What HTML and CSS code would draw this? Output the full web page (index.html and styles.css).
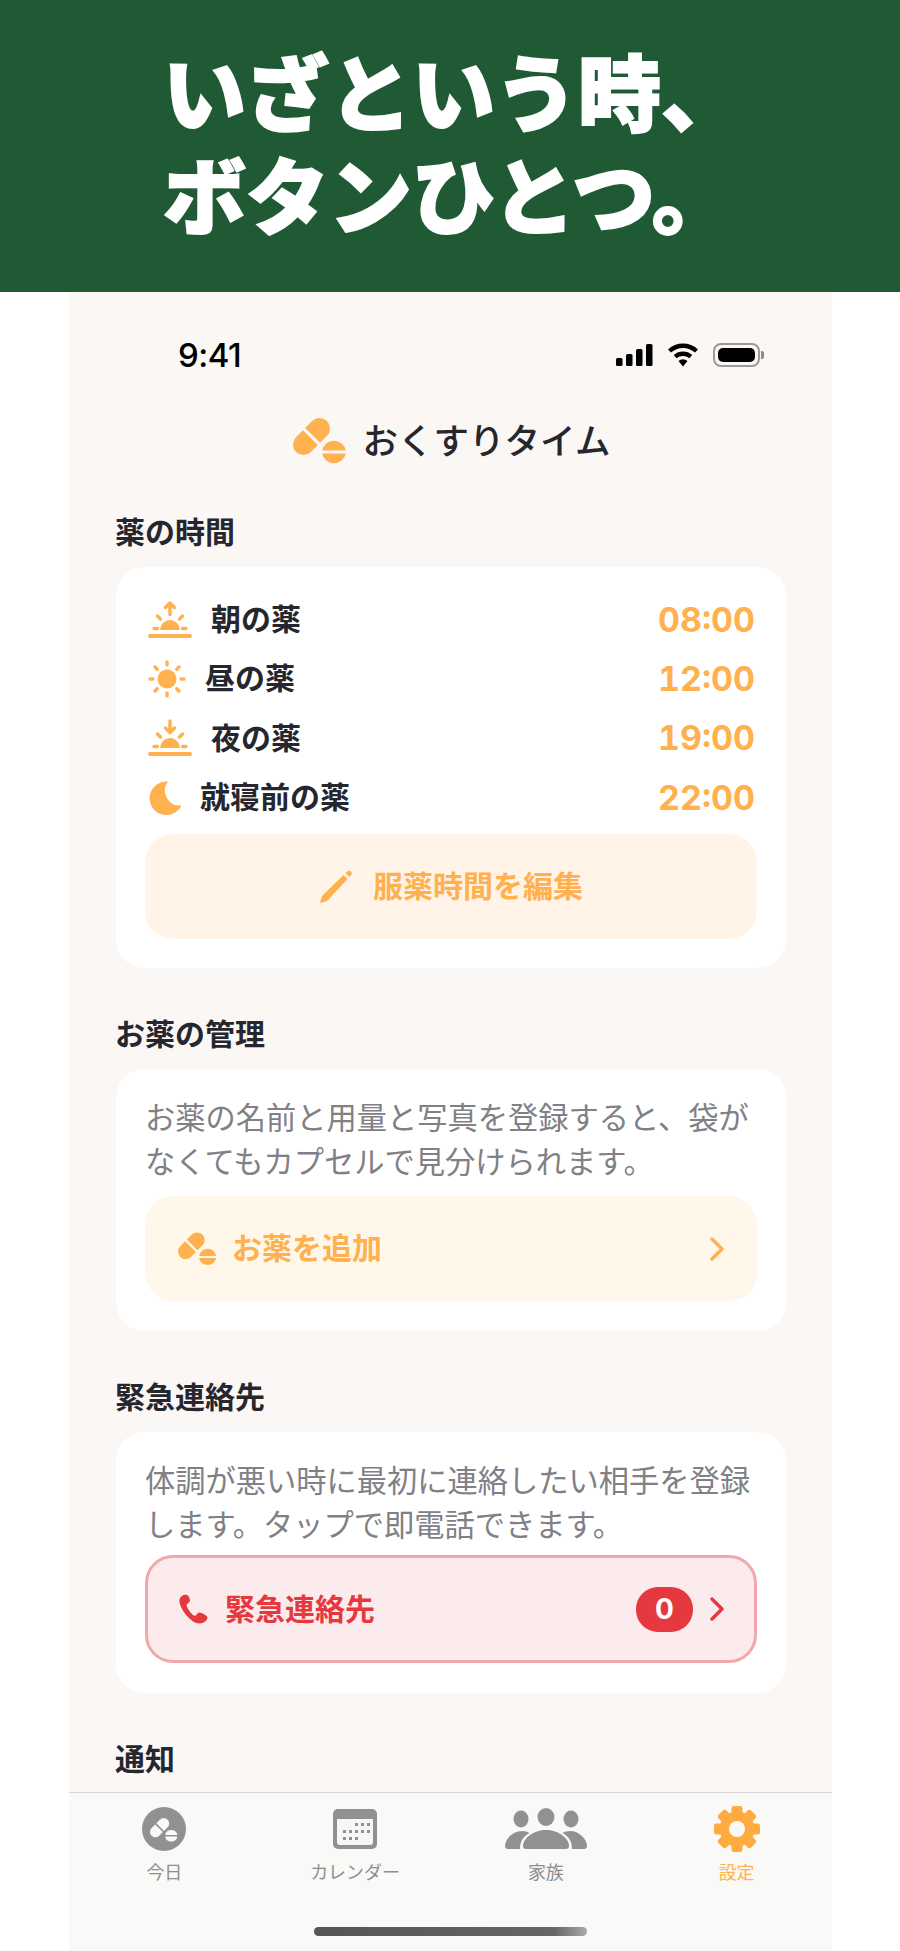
FILE: index.html
```html
<!DOCTYPE html>
<html lang="ja">

<head>
    <meta charset="UTF-8">
    <meta name="viewport" content="width=device-width, initial-scale=1.0">
    <title>おくすりタイム</title>
    <link rel="stylesheet" href="styles.css">
</head>

<body>

    <svg class="defs" width="0" height="0" aria-hidden="true">
        <!-- pill logo, used in the header, the add button and the today tab -->
        <symbol id="pills" viewBox="0 0 54 46">
            <g transform="translate(18.5 18.5) rotate(-45)">
                <path d="M-1.6 -10.5 H-11.3 A10.5 10.5 0 0 0 -11.3 10.5 H-1.6 Z"/>
                <path d="M1.6 -10.5 H11.3 A10.5 10.5 0 0 1 11.3 10.5 H1.6 Z"/>
            </g>
            <path d="M29.2 32.6 A12 12 0 0 1 52.8 32.6 Z"/>
            <path d="M29.2 35.4 A12 12 0 0 0 52.8 35.4 Z"/>
        </symbol>
        <symbol id="chevron" viewBox="0 0 14 24">
            <path d="M2 2 L12 12 L2 22" fill="none" stroke="currentColor" stroke-width="3.4" stroke-linecap="round" stroke-linejoin="round"/>
        </symbol>
    </svg>

    <header class="banner">
        <h1>いざという時、<br>ボタンひとつ。</h1>
    </header>

    <div class="phone">

        <div class="status-bar">
            <span class="clock">9:41</span>
            <div class="status-icons">
                <svg width="37" height="22" viewBox="0 0 37 22">
                    <rect x="0" y="14" width="6.5" height="8" rx="1.5"/>
                    <rect x="10" y="10" width="6.5" height="12" rx="1.5"/>
                    <rect x="20" y="5" width="6.5" height="17" rx="1.5"/>
                    <rect x="30" y="0" width="6.5" height="22" rx="1.5"/>
                </svg>
                <svg width="32" height="24" viewBox="0 0 32 24">
                    <path d="M2.5 8 A20 20 0 0 1 29.5 8" fill="none" stroke="#000" stroke-width="4.4"/>
                    <path d="M8.2 13.6 A12 12 0 0 1 23.8 13.6" fill="none" stroke="#000" stroke-width="4.4"/>
                    <path d="M11.5 18 A7 7 0 0 1 20.5 18 L16 23.5 Z"/>
                </svg>
                <div class="battery"><div class="battery-level"></div></div>
            </div>
        </div>

        <div class="app-title">
            <svg class="app-logo"><use href="#pills"/></svg>
            <span>おくすりタイム</span>
        </div>

        <main class="content">

            <section class="section">
                <h2>薬の時間</h2>
                <div class="card card-times">
                    <div class="time-row">
                        <svg class="icon-sunrise" viewBox="0 0 44 38">
                            <path d="M12 29 A10 10 0 0 1 32 29 Z"/>
                            <g fill="none" stroke="currentColor" stroke-width="3.4" stroke-linecap="round" stroke-linejoin="round">
                                <path d="M2 35 H42" stroke-width="3.8"/>
                                <path d="M6 27.5 H9.5 M34.5 27.5 H38 M9.5 15 L12.5 18 M34.5 15 L31.5 18"/>
                                <path d="M22 13.5 V2 M17.5 6.5 L22 2 L26.5 6.5"/>
                            </g>
                        </svg>
                        <span class="time-name">朝の薬</span>
                        <span class="time-value">08:00</span>
                    </div>
                    <div class="time-row">
                        <svg class="icon-sun" viewBox="0 0 38 38">
                            <circle cx="19" cy="19" r="9.5"/>
                            <g fill="none" stroke="currentColor" stroke-width="3.4" stroke-linecap="round">
                                <path d="M19 2 V5 M19 33 V36 M2 19 H5 M33 19 H36 M7 7 L9.2 9.2 M31 7 L28.8 9.2 M7 31 L9.2 28.8 M31 31 L28.8 28.8"/>
                            </g>
                        </svg>
                        <span class="time-name">昼の薬</span>
                        <span class="time-value">12:00</span>
                    </div>
                    <div class="time-row">
                        <svg class="icon-sunrise" viewBox="0 0 44 38">
                            <path d="M12 29 A10 10 0 0 1 32 29 Z"/>
                            <g fill="none" stroke="currentColor" stroke-width="3.4" stroke-linecap="round" stroke-linejoin="round">
                                <path d="M2 35 H42" stroke-width="3.8"/>
                                <path d="M6 27.5 H9.5 M34.5 27.5 H38 M9.5 15 L12.5 18 M34.5 15 L31.5 18"/>
                                <path d="M22 2 V13.5 M17.5 9 L22 13.5 L26.5 9"/>
                            </g>
                        </svg>
                        <span class="time-name">夜の薬</span>
                        <span class="time-value">19:00</span>
                    </div>
                    <div class="time-row">
                        <svg class="icon-moon" viewBox="0 0 34 34">
                            <path d="M20 0.5 A16.8 16.8 0 1 0 33.5 24.5 A15 15 0 0 1 20 0.5 Z"/>
                        </svg>
                        <span class="time-name">就寝前の薬</span>
                        <span class="time-value">22:00</span>
                    </div>
                    <div class="btn btn-edit">
                        <svg class="icon-pencil" viewBox="0 0 34 34">
                            <path d="M1 33 L3 26 L24.5 5 L28.5 9 L8 31 Z"/>
                            <path d="M26.5 3 L28.5 1.2 Q30.5 0 32 1.5 Q33.5 3 32.5 4.8 L30.5 7 Z"/>
                        </svg>
                        <span class="btn-text">服薬時間を編集</span>
                    </div>
                </div>
            </section>

            <section class="section">
                <h2>お薬の管理</h2>
                <div class="card card-text">
                    <p>お薬の名前と用量と写真を登録すると、袋がなくてもカプセルで見分けられます。</p>
                    <div class="btn btn-add">
                        <svg class="icon-add"><use href="#pills"/></svg>
                        <span class="btn-text btn-label">お薬を追加</span>
                        <svg class="chevron"><use href="#chevron"/></svg>
                    </div>
                </div>
            </section>

            <section class="section">
                <h2>緊急連絡先</h2>
                <div class="card card-text">
                    <p>体調が悪い時に最初に連絡したい相手を登録します。タップで即電話できます。</p>
                    <div class="btn btn-sos">
                        <svg class="icon-phone" viewBox="0 0 30 30">
                            <path d="M8.5 0.8 C6 0.2 3.2 1.6 2 4 C0.8 6.5 1.5 10 3.5 14 C6 19 10 24 15 27.5 C18.5 29.8 22.5 30 25.5 28.5 C28 27.2 29.8 25 29.5 23.5 C29.3 22.5 28.3 21.6 26.5 20.5 C24 19 22.2 18.2 21 18.5 C19.8 18.8 19 20 18 21.2 C17.2 22 16 22 15 21 C12.5 18.8 10 15.5 8.8 12.5 C8.3 11.2 8.8 10.3 9.8 9.5 C11 8.5 12 7.7 12 6.5 C12 5.3 11.3 3.5 10.5 2.2 C10 1.4 9.3 1 8.5 0.8 Z"/>
                        </svg>
                        <span class="btn-text btn-label">緊急連絡先</span>
                        <span class="count-badge">0</span>
                        <svg class="chevron"><use href="#chevron"/></svg>
                    </div>
                </div>
            </section>

            <section class="section">
                <h2>通知</h2>
            </section>

        </main>

        <nav class="tab-bar">
            <div class="tabs">
                <div class="tab">
                    <svg class="tab-icon" width="44" height="44" viewBox="0 0 44 44">
                        <circle cx="22" cy="22" r="22"/>
                        <svg x="8" y="11" width="28" height="24" class="tab-pills"><use href="#pills"/></svg>
                    </svg>
                    <span>今日</span>
                </div>
                <div class="tab">
                    <svg class="tab-icon" width="44" height="40" viewBox="0 0 44 40">
                        <rect width="44" height="40" rx="5"/>
                        <path d="M4 10 H40 V33 Q40 36 37 36 H7 Q4 36 4 33 Z" fill="#f6f6f6"/>
                        <g class="cal-dots">
                            <rect x="22" y="14" width="3" height="3"/><rect x="28" y="14" width="3" height="3"/><rect x="34" y="14" width="3" height="3"/>
                            <rect x="10" y="21" width="3" height="3"/><rect x="16" y="21" width="3" height="3"/><rect x="22" y="21" width="3" height="3"/><rect x="28" y="21" width="3" height="3"/><rect x="34" y="21" width="3" height="3"/>
                            <rect x="10" y="28" width="3" height="3"/><rect x="16" y="28" width="3" height="3"/><rect x="22" y="28" width="3" height="3"/>
                        </g>
                    </svg>
                    <span>カレンダー</span>
                </div>
                <div class="tab">
                    <svg class="tab-icon" width="82" height="40" viewBox="0 0 82 40">
                        <ellipse cx="16" cy="10" rx="7.5" ry="8.5"/>
                        <ellipse cx="41" cy="8" rx="8.5" ry="9"/>
                        <ellipse cx="66" cy="10" rx="7.5" ry="8.5"/>
                        <path d="M0 37 C0 30 8 22 17 22 C20 22 22.5 22.7 24.5 24 C18.5 27.5 15 32 15 40 H3 Q0 40 0 37 Z"/>
                        <path d="M82 37 C82 30 74 22 65 22 C62 22 59.5 22.7 57.5 24 C63.5 27.5 67 32 67 40 H79 Q82 40 82 37 Z"/>
                        <path d="M18 37 C18 29 29 21 41 21 C53 21 64 29 64 37 Q64 40 61 40 H21 Q18 40 18 37 Z"/>
                    </svg>
                    <span>家族</span>
                </div>
                <div class="tab tab-active">
                    <svg class="tab-icon" width="46" height="46" viewBox="0 0 46 46">
                        <circle cx="23" cy="23" r="17.5"/>
                        <g>
                            <rect x="17.5" y="0" width="11" height="46" rx="2.5"/>
                            <rect x="17.5" y="0" width="11" height="46" rx="2.5" transform="rotate(45 23 23)"/>
                            <rect x="17.5" y="0" width="11" height="46" rx="2.5" transform="rotate(90 23 23)"/>
                            <rect x="17.5" y="0" width="11" height="46" rx="2.5" transform="rotate(135 23 23)"/>
                        </g>
                        <circle cx="23" cy="23" r="8" class="gear-hole"/>
                    </svg>
                    <span>設定</span>
                </div>
            </div>
            <div class="home-indicator"></div>
        </nav>

    </div>

</body>

</html>
```

FILE: styles.css
```css
* {
    box-sizing: border-box;
}

body {
    margin: 0;
    background-color: #fff;
    font-family: "Noto Sans CJK JP", "Noto Sans", sans-serif;
    color: #26262e;
}

.defs {
    position: absolute;
}

svg {
    display: block;
    fill: currentColor;
}

/* green banner */
.banner {
    height: 292px;
    background-color: #205a35;
    padding: 0 0 11px 163px;
    display: flex;
    align-items: center;
}

.banner h1 {
    margin: 0;
    color: #fff;
    font-size: 83px;
    font-weight: 900;
    line-height: 103px;
    white-space: nowrap;
    -webkit-text-stroke: 2px #fff;
}

/* phone screen */
.phone {
    width: 763px;
    height: 1659px;
    margin-left: 69px;
    background-color: #faf7f4;
    display: flex;
    flex-direction: column;
}

.status-bar {
    height: 126px;
    flex-shrink: 0;
    padding: 0 72px 0 109px;
    display: flex;
    align-items: center;
    justify-content: space-between;
}

.clock {
    font-family: "Inter", sans-serif;
    font-size: 33px;
    font-weight: 500;
    letter-spacing: -0.5px;
    color: #000;
}

.status-icons {
    display: flex;
    align-items: center;
    gap: 14px;
    color: #000;
}

.battery {
    width: 47px;
    height: 24px;
    padding: 3px;
    border: 2px solid #9a9a9a;
    border-radius: 8px;
    position: relative;
}

.battery::after {
    content: "";
    position: absolute;
    right: -6px;
    top: 6px;
    width: 3px;
    height: 8px;
    background-color: #8c8c8c;
    border-radius: 0 2px 2px 0;
}

.battery-level {
    height: 100%;
    background-color: #000;
    border-radius: 5px;
}

.app-title {
    height: 46px;
    flex-shrink: 0;
    display: flex;
    align-items: center;
    justify-content: center;
    gap: 16px;
    font-size: 35.5px;
    font-weight: 500;
}

.app-title span {
    padding-bottom: 5px;
}

.app-logo {
    width: 54px;
    height: 46px;
    margin-left: 2px;
    color: #ffb04f;
}

.content {
    flex: 1;
    min-height: 0;
    overflow: hidden;
    padding: 49px 46px 0 47px;
}

.section {
    margin-bottom: 47px;
}

.section h2 {
    margin: 0 0 14px -1px;
    padding-bottom: 5px;
    font-size: 30px;
    font-weight: 700;
    line-height: 35px;
}

.card {
    background-color: #fff;
    border-radius: 28px;
    padding: 23px 29px 29px;
}

/* medicine times */
.time-row {
    height: 59.3px;
    padding: 0 2px 0 3px;
    display: flex;
    align-items: center;
    gap: 19px;
    color: #ffb04f;
}

.icon-sunrise {
    width: 44px;
    height: 38px;
}

.icon-sun {
    width: 38px;
    height: 38px;
}

.icon-moon {
    width: 34px;
    height: 34px;
    margin-right: -1px;
}

.time-name {
    padding-bottom: 5px;
    color: #26262e;
    font-size: 30px;
    font-weight: 700;
}

.time-value {
    margin-left: auto;
    padding-bottom: 1px;
    font-family: "Inter", sans-serif;
    font-size: 34px;
    font-weight: 700;
    font-variant-numeric: tabular-nums;
}

/* buttons */
.btn {
    height: 105px;
    border-radius: 28px;
    display: flex;
    align-items: center;
    font-size: 30px;
    font-weight: 700;
}

.btn-text {
    padding-bottom: 5px;
}

.btn-edit {
    margin-top: 7px;
    justify-content: center;
    gap: 20px;
    background-color: #fff4e7;
    color: #ffb04f;
}

.icon-pencil {
    width: 34px;
    height: 34px;
}

.btn-add {
    margin-top: 12px;
    padding: 0 33px;
    gap: 15px;
    background-color: #fff7ea;
    color: #ffb04f;
}

.icon-add {
    width: 39px;
    height: 36px;
}

.btn-label {
    flex: 1;
}

.chevron {
    width: 14px;
    height: 24px;
}

.card-text {
    padding: 25px 29px 30px;
}

.card-text p {
    margin: 0;
    padding-bottom: 2px;
    color: #808085;
    font-size: 30.25px;
    line-height: 44px;
}

.btn-sos {
    height: 108px;
    margin-top: 8px;
    padding: 0 30px;
    gap: 17px;
    background-color: #fcebec;
    border: 3px solid #f2a8ab;
    color: #e5393f;
}

.icon-phone {
    width: 30px;
    height: 30px;
}

.count-badge {
    width: 57px;
    height: 45px;
    border-radius: 22px;
    background-color: #e5393f;
    color: #fff;
    font-family: "Inter", sans-serif;
    font-size: 28px;
    font-weight: 700;
    display: flex;
    align-items: center;
    justify-content: center;
}

/* tab bar */
.tab-bar {
    height: 159px;
    flex-shrink: 0;
    background-color: #f9f9f8;
    border-top: 1px solid #d6d6d6;
    padding-top: 13px;
    display: flex;
    flex-direction: column;
    align-items: center;
}

.tabs {
    width: 100%;
    display: grid;
    grid-template-columns: repeat(4, 1fr);
}

.tab {
    height: 78px;
    display: flex;
    flex-direction: column;
    align-items: center;
    color: #8e8e8e;
    font-size: 18px;
    line-height: 24px;
}

.tab-icon {
    height: 46px;
    margin-bottom: 7px;
    fill: #919191;
}

.tab-pills {
    fill: #f9f9f8;
}

.cal-dots {
    fill: #919191;
}

.tab-active {
    color: #ffb04f;
}

.tab-active .tab-icon {
    fill: #ffab40;
}

.tab-active .gear-hole {
    fill: #f9f9f8;
}

.home-indicator {
    width: 273px;
    height: 9px;
    margin-top: 43px;
    border-radius: 5px;
    background: linear-gradient(to right, #555 0%, #666 88%, #aaa 100%);
}
```
